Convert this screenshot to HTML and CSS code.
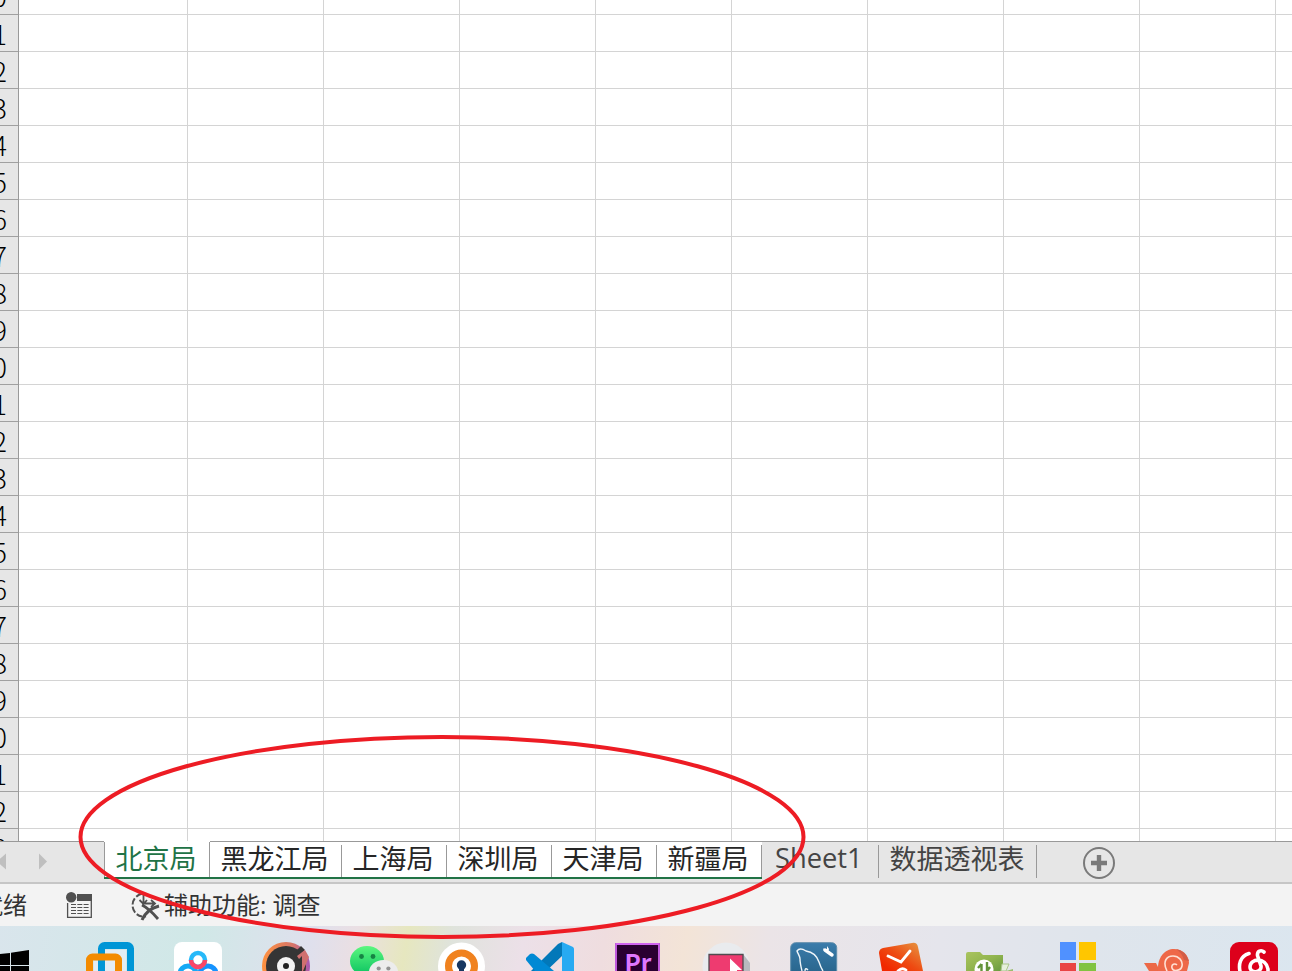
FILE: index.html
```html
<!DOCTYPE html>
<html lang="zh-CN">
<head>
<meta charset="utf-8">
<title>工作簿</title>
<link rel="stylesheet" href="styles.css">
</head>
<body>
<div class="screen">
  <main class="sheet">
    <div class="row-headers">
      <div class="first">0</div><div>1</div><div>2</div><div>3</div><div>4</div><div>5</div><div>6</div><div>7</div><div>8</div><div>9</div><div>0</div><div>1</div><div>2</div><div>3</div><div>4</div><div>5</div><div>6</div><div>7</div><div>8</div><div>9</div><div>0</div><div>1</div><div>2</div><div>3</div>
    </div>
    <div class="cells"></div>
  </main>

  <nav class="tabs">
    <div class="tab-nav">
      <svg width="104" height="41" viewBox="0 0 104 41"><path fill="#bfbfbf" d="M6 11.5v16L-3 19.5zM39 11.5v16l8-8z"/></svg>
    </div>
    <div class="tab current">北京局</div>
    <div class="tab selected wide">黑龙江局</div>
    <div class="tab selected">上海局</div>
    <div class="tab selected">深圳局</div>
    <div class="tab selected">天津局</div>
    <div class="tab selected last">新疆局</div>
    <div class="tab plain sheet1">Sheet1</div>
    <div class="tab plain pivot">数据透视表</div>
    <div class="add-sheet">
      <svg width="34" height="34" viewBox="0 0 34 34"><circle cx="17" cy="17" r="15" fill="none" stroke="#7a7a7a" stroke-width="2"/><path d="M17 9v16M9 17h16" stroke="#7a7a7a" stroke-width="4.4"/></svg>
    </div>
  </nav>

  <footer class="status">
    <span class="ready">就绪</span>
    <svg class="macro" width="28" height="28" viewBox="0 0 28 28"><path d="M11 2h15v7H11z" fill="#505050"/><circle cx="5.2" cy="5.2" r="5.2" fill="#505050"/><path d="M1.6 11v14.3h23.7V8" fill="none" stroke="#505050" stroke-width="1.3"/><path d="M5 12.5h18M5 15.5h18M5 18.5h18M5 21.5h18" stroke="#505050" stroke-width="1.2" stroke-dasharray="5 1.3"/></svg>
    <svg class="access" width="30" height="30" viewBox="0 0 30 30"><path d="M11 1.8A11.6 11.6 0 0 0 11 24.6q2 .3 4-.2" fill="none" stroke="#505050" stroke-width="2" stroke-dasharray="6.5 2.2"/><path d="M12.5 1v10.5h11M8.5 8l4 4 3.5-4M20 8l4 3.5-4 3.5" fill="none" stroke="#505050" stroke-width="1.8"/><path d="M11 13c6 3 11 8 16 14" fill="none" stroke="#505050" stroke-width="2.8"/><path d="M28 14C20 16 14 21 11 28" fill="none" stroke="#505050" stroke-width="3"/></svg>
    <span class="a11y">辅助功能: 调查</span>
  </footer>

  <div class="taskbar">
    <svg viewBox="0 0 48 29"><path d="M0 12.3L12 11v12H0zM13 10.8L31 8v15H13zM0 24h12v5H0zM13 24h18v5H13z"/></svg>
    <svg viewBox="0 0 48 29"><path d="M19 8h21v21H19z" fill="#e3edf4"/><rect x="15.5" y="3.5" width="29" height="36" rx="3" fill="none" stroke="#0096d6" stroke-width="7"/><rect x="3.5" y="15" width="29" height="30" rx="3" fill="none" stroke="#f38b00" stroke-width="7"/><path d="M8 19h20v10H8z" fill="#e3edf4"/><path d="M12 19h7v10h-7z" fill="#0096d6"/></svg>
    <svg viewBox="0 0 48 29"><rect width="48" height="48" rx="8" fill="#fff"/><circle cx="14" cy="32" r="8" fill="none" stroke="#16a9f5" stroke-width="5"/><circle cx="34" cy="32" r="8" fill="none" stroke="#1593ff" stroke-width="5"/><circle cx="24" cy="18" r="7" fill="#fff" stroke="#27b9f9" stroke-width="4.5"/><path d="M17 18a7 7 0 0 0 14 0" fill="none" stroke="#fa4668" stroke-width="4.5"/></svg>
    <svg viewBox="0 0 48 29"><defs><linearGradient id="disc"><stop stop-color="#ff923f"/><stop offset=".65" stop-color="#d67469"/><stop offset="1" stop-color="#a858b2"/></linearGradient></defs><circle cx="24" cy="24" r="24" fill="url(#disc)"/><circle cx="24" cy="24" r="20" fill="#353535"/><path d="M34 9l5-5 4 4-6 5z" fill="#353535"/><path d="M35 14l8-6 4 7-6 14h-1V14l-3 3z" fill="#d0706f"/><circle cx="24" cy="24" r="9" fill="#f4f4f4"/><circle cx="24" cy="24" r="3" fill="#222"/></svg>
    <svg viewBox="0 0 48 29"><defs><linearGradient id="chat" x2="0" y2="1"><stop stop-color="#5cf77f"/><stop offset="1" stop-color="#09c160"/></linearGradient></defs><ellipse cx="17" cy="19" rx="17" ry="15" fill="url(#chat)"/><circle cx="11.5" cy="14.5" r="2.4" fill="#168443"/><circle cx="23" cy="14.5" r="2.4" fill="#168443"/><ellipse cx="33.5" cy="30" rx="14.5" ry="12" fill="#ececec"/><circle cx="28.7" cy="26.5" r="2.1" fill="#929292"/><circle cx="38.4" cy="26.5" r="2.1" fill="#929292"/></svg>
    <svg viewBox="0 0 48 29"><circle cx="23.5" cy="24" r="23.5" fill="#fff"/><circle cx="23.5" cy="24" r="13" fill="#fff" stroke="#f0821f" stroke-width="7"/><circle cx="23.5" cy="23" r="4.7" fill="#173761"/><path d="M21 24h5v6h-5z" fill="#173761"/></svg>
    <svg viewBox="0 0 48 29"><path d="M0 34L32 2l4-2v14L14 35z" fill="#0278b9"/><path d="M0 16l4-4q2-1 4 0l20 17H9L0 18z" fill="#0089d4"/><path d="M36 0l11 5q1 1 1 2v22H36z" fill="#27aaf2"/></svg>
    <svg viewBox="0 0 48 29"><path d="M1 1h45v28H1z" fill="#2a0031"/><path d="M2 29V2h43v27" fill="none" stroke="#cf63ef" stroke-width="1.8"/><text x="10.5" y="30" class="pr">Pr</text></svg>
    <svg viewBox="0 0 48 29"><circle cx="24" cy="24" r="23.5" fill="#e9ebee"/><path d="M41 12l7 9v8h-7z" fill="#b8bac0"/><path d="M7 29V12.5h34V29" fill="#ee3b70" stroke="#504b50" stroke-width="1.3"/><path d="M28 16.5l12 11.5h-5v1h-7z" fill="#fff"/></svg>
    <svg viewBox="0 0 48 29"><defs><linearGradient id="db" x2="0" y2="1"><stop stop-color="#3a7cab"/><stop offset="1" stop-color="#205a7d"/></linearGradient></defs><rect x=".7" y=".7" width="46" height="46" rx="5" fill="url(#db)" stroke="#5e8dab"/><path d="M12 29c-1-4-2-8-2-12 0-3-2-5-3-8 2-3 6-2 9 0 7 1 11 5 13 11 1 3 2 6 4 9M15 29q0-4 3-1" fill="none" stroke="#eef5fa" stroke-width="1.4"/><path d="M35 8l7 5" fill="none" stroke="#fff" stroke-width="3.4" stroke-linecap="round"/><path d="M33 6l1 3 4 1 1-3-2-3v3l-2 1z" fill="#fff"/></svg>
    <svg viewBox="0 0 48 29"><defs><linearGradient id="mind" x1="1" x2=".1" y2=".8"><stop stop-color="#e59b45"/><stop offset=".6" stop-color="#ee4b12"/><stop offset="1" stop-color="#f12800"/></linearGradient></defs><path d="M1 11q0-4 4-5l29-5q5-1 6 4l5 24H4z" fill="url(#mind)"/><path d="M10 14l13 6 9-11M20 29q4-4 8-1" fill="none" stroke="#fff" stroke-width="2.8" stroke-linecap="round"/></svg>
    <svg viewBox="0 0 48 29"><defs><linearGradient id="folder" x2="1" y2="1"><stop stop-color="#aac45f"/><stop offset=".5" stop-color="#92b54f"/><stop offset="1" stop-color="#689a40"/></linearGradient></defs><path d="M0 12q0-2 2-2h12l3 3h20v16H0z" fill="url(#folder)"/><path d="M36 22h7l-3 7h-5z" fill="#e6f0dd" stroke="#a9c58b"/><path d="M40 29l7-2v2z" fill="#9bbd6e"/><circle cx="18" cy="27" r="9.5" fill="#fff"/><path d="M15.5 29v-7m-3.5 4l3.5-4M21 20v9m3-4l-3 4" fill="none" stroke="#63943a" stroke-width="2.4"/></svg>
    <svg viewBox="0 0 48 29"><path d="M6 0h16v18H6z" fill="#5091ff"/><path d="M25 0h17v18H25z" fill="#ffc600"/><path d="M6 21h16v8H6z" fill="#e94444"/><path d="M25 21h17v8H25z" fill="#81c341"/></svg>
    <svg viewBox="0 0 48 29"><path d="M2 21h12l4 8H7z" fill="#ec6846"/><path d="M16 29C15 15 23 7 32 7c8 0 15 6 15 14l-2 8z" fill="#ee6848"/><path d="M34 7q9 1 13 12l-5-1q-2-7-8-11z" fill="#d25d47"/><path d="M25 29C20 19 25 14 31 14s10 5 9 10-9 6-10 2c-1-4 3-5 5-3" fill="none" stroke="#ffe0d4" stroke-width="1.6"/></svg>
    <svg viewBox="0 0 48 29"><rect width="48" height="48" rx="9" fill="#dd001b"/><path d="M19 11.5C10 14 8 23 10.500 31M34 10c-3-2.500-7-1-6.500 3.500L31 24c1 7-11 8-11 1 0-9 16-10 18 2v3" fill="none" stroke="#fff" stroke-width="3.6" stroke-linecap="round"/></svg>
  </div>

  <svg class="annotation" width="732" height="208" viewBox="0 0 732 208"><ellipse cx="366" cy="104" rx="361.500" ry="100" fill="none" stroke="#ed1c24" stroke-width="4"/></svg>
</div>
</body>
</html>
```
FILE: styles.css
```css
* { box-sizing: border-box; }
body { margin: 0; overflow: hidden; }
.screen {
  position: relative;
  width: 1292px;
  height: 971px;
  overflow: hidden;
  display: flex;
  flex-direction: column;
  background: #fff;
  font-family: "Open Sans", "Noto Sans CJK SC", sans-serif;
}
.sheet { display: flex; height: 841px; overflow: hidden; }
.row-headers {
  width: 19px;
  flex: none;
  background: #e6e6e6;
  border-right: 1px solid #999;
  font: 300 27px/37px "Noto Sans CJK SC", sans-serif;
  color: #000;
}
.row-headers div {
  height: 37px;
  border-bottom: 1px solid #a0a0a0;
  display: flex;
  justify-content: flex-end;
  padding-right: 11px;
}
.row-headers .first { height: 15px; align-items: flex-end; line-height: 36px; }
.cells {
  flex: 1;
  background:
    repeating-linear-gradient(to right, transparent 0 135px, #d4d4d4 135px 136px) 33px 0 / 1360px 100% no-repeat,
    repeating-linear-gradient(to bottom, #d4d4d4 0 1px, transparent 1px 37px) 0 14px / 100% 1110px no-repeat;
}
.tabs {
  height: 43px;
  flex: none;
  display: flex;
  background: #e6e6e6;
  border-bottom: 2px solid #c6c6c6;
  font-size: 27px;
  line-height: 34px;
}
.tab-nav { width: 104px; border-top: 1px solid #999; }
.tab-nav svg { display: block; }
.tab {
  width: 105px;
  height: 38px;
  padding-left: 10.5px;
  white-space: nowrap;
  background: linear-gradient(#999, #999) right 3px / 1px 33px no-repeat #fff;
  border-top: 1px solid #999;
  border-bottom: 2px solid #217346;
  color: #262626;
}
.tab.current {
  width: 106px;
  padding-left: 11.5px;
  border-top-color: #fff;
  color: #217346;
  background: linear-gradient(#999, #999) left 0 / 1px 100% no-repeat, linear-gradient(#999, #999) right 0 / 1px 100% no-repeat #fff;
}
.tab.wide { width: 132px; }
.tab.plain { border-bottom: 0; background-color: #e6e6e6; color: #444; }
.tab.sheet1 { width: 117px; padding-left: 13px; font-size: 27.3px; line-height: 32px; }
.tab.pivot { width: 158px; }
.add-sheet { flex: 1; border-top: 1px solid #999; padding: 4px 0 0 45px; }
.add-sheet svg { display: block; }
.status {
  height: 42px;
  flex: none;
  display: flex;
  background: #f3f3f3;
  color: #333;
  font-size: 24px;
  line-height: 42px;
  white-space: nowrap;
}
.ready { width: 87px; margin-left: -21px; flex: none; }
.macro { margin-top: 8px; flex: none; }
.access { margin: 8px 0 0 37px; flex: none; }
.a11y { margin-left: 3px; }
.taskbar {
  height: 45px;
  flex: none;
  display: flex;
  gap: 40px;
  padding: 16px 0 0;
  margin-left: -2px;
  background: linear-gradient(100deg, #d9e5ec 0, #d0e8e7 200px, #dfe0ed 310px, #eadfe3 355px, #e6e7bf 405px, #dfe3dc 450px, #ece0e8 520px, #efdddf 600px, #f3e4d7 680px, #ebe4e7 760px, #e5e5ec 930px, #dfe5ec 1080px, #dbe6ef 1292px);
}
.taskbar svg { width: 48px; height: 29px; flex: none; }
.pr { font: 600 24.5px "Noto Sans CJK SC", "Open Sans", sans-serif; fill: #df78ff; }
.annotation { position: absolute; left: 76px; top: 733px; }
```
